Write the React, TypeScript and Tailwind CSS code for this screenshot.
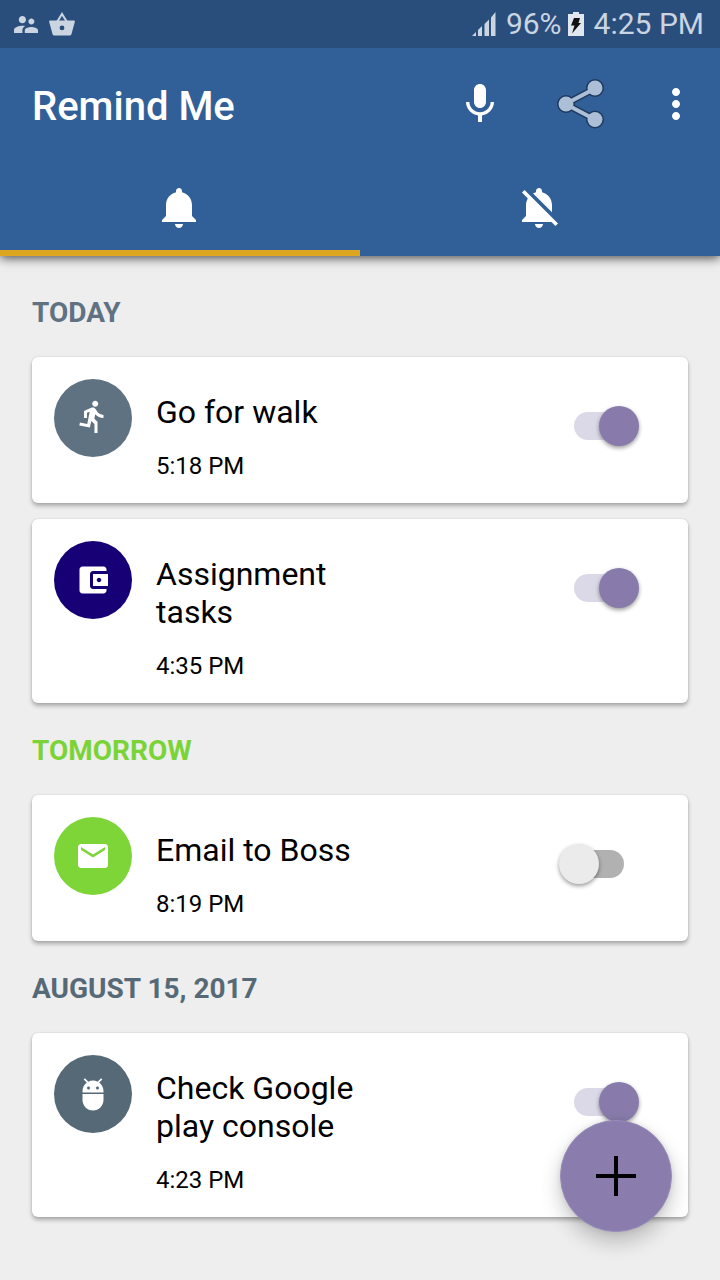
import { useState, type ReactNode } from "react";

const paths = {
  mic: "M12 14c1.66 0 2.99-1.34 2.99-3L15 5c0-1.66-1.34-3-3-3S9 3.34 9 5v6c0 1.66 1.34 3 3 3zm5.3-3c0 3-2.54 5.1-5.3 5.1S6.7 14 6.7 11H5c0 3.41 2.72 6.23 6 6.72V21h2v-3.28c3.28-.48 6-3.3 6-6.72h-1.7z",
  more: "M12 8c1.1 0 2-.9 2-2s-.9-2-2-2-2 .9-2 2 .9 2 2 2zm0 2c-1.1 0-2 .9-2 2s.9 2 2 2 2-.9 2-2-.9-2-2-2zm0 6c-1.1 0-2 .9-2 2s.9 2 2 2 2-.9 2-2-.9-2-2-2z",
  bell: "M11.5 22c1.1 0 2-.9 2-2h-4c0 1.1.9 2 2 2zm6.5-6v-5.5c0-3.07-2.13-5.64-5-6.32V3.5c0-.83-.67-1.5-1.5-1.5S10 2.67 10 3.5v.68c-2.87.68-5 3.25-5 6.32V16l-2 2v1h17v-1l-2-2z",
  bellOff:
    "M11.5 22c1.1 0 2-.9 2-2h-4c0 1.1.9 2 2 2zM18 10.5c0-3.07-2.13-5.64-5-6.32V3.5c0-.83-.67-1.5-1.5-1.5S10 2.67 10 3.5v.68c-.51.12-.99.32-1.45.56L18 14.18V10.5zm-.27 8.5l2 2L21 19.73 4.27 3 3 4.27l2.92 2.92C5.34 8.15 5 9.29 5 10.5V16l-2 2v1h14.73z",
  run: "M13.49 5.48c1.1 0 2-.9 2-2s-.9-2-2-2-2 .9-2 2 .9 2 2 2zm-3.6 13.9l1-4.4 2.1 2v6h2v-7.5l-2.1-2 .6-3c1.3 1.5 3.3 2.5 5.5 2.5v-2c-1.9 0-3.5-1-4.3-2.4l-1-1.6c-.4-.6-1-1-1.7-1-.3 0-.5.1-.8.1l-5.2 2.2v4.7h2v-3.4l1.8-.7-1.6 8.1-4.9-1-.4 2 7 1.4z",
  wallet:
    "M21 18v1c0 1.1-.9 2-2 2H5c-1.11 0-2-.9-2-2V5c0-1.1.89-2 2-2h14c1.1 0 2 .9 2 2v1h-9c-1.11 0-2 .9-2 2v8c0 1.1.89 2 2 2h9zm-9-2h10V8H12v8zm4-2.5c-.83 0-1.5-.67-1.5-1.5s.67-1.5 1.5-1.5 1.5.67 1.5 1.5-.67 1.5-1.5 1.5z",
  mail: "M20 4H4c-1.1 0-1.99.9-1.99 2L2 18c0 1.1.9 2 2 2h16c1.1 0 2-.9 2-2V6c0-1.1-.9-2-2-2zm0 4l-8 5-8-5V6l8 5 8-5v2z",
  android:
    "M5 16c0 3.87 3.13 7 7 7s7-3.13 7-7v-4H5v4zM16.12 4.37l2.1-2.1-.82-.83-2.3 2.31C14.16 3.28 13.12 3 12 3s-2.16.28-3.09.75L6.6 1.44l-.82.83 2.1 2.1C6.14 5.64 5 7.68 5 10v1h14v-1c0-2.32-1.14-4.36-2.88-5.63zM9 9c-.55 0-1-.45-1-1s.45-1 1-1 1 .45 1 1-.45 1-1 1zm6 0c-.55 0-1-.45-1-1s.45-1 1-1 1 .45 1 1-.45 1-1 1z",
  people:
    "M16.5 12c1.38 0 2.49-1.12 2.49-2.5S17.88 7 16.5 7C15.12 7 14 8.12 14 9.5s1.12 2.5 2.5 2.5zM9 11c1.66 0 2.99-1.34 2.99-3S10.66 5 9 5C7.34 5 6 6.34 6 8s1.34 3 3 3zm7.5 3c-1.83 0-5.5.92-5.5 2.75V19h11v-2.25c0-1.83-3.67-2.75-5.5-2.75zM9 13c-2.33 0-7 1.17-7 3.5V19h7v-2.25c0-.85.33-2.34 2.37-3.47C10.5 13.1 9.66 13 9 13z",
};

type IconProps = { d: string; className: string; viewBox?: string };

function Icon({ d, className, viewBox = "0 0 24 24" }: IconProps) {
  return (
    <svg viewBox={viewBox} className={className} fill="currentColor" aria-hidden="true">
      <path d={d} />
    </svg>
  );
}

function ShareIcon() {
  return (
    <svg viewBox="0 0 48 52" className="h-[52px] w-12" aria-hidden="true">
      <g fill="none" stroke="#1e3a5f" strokeWidth="7">
        <path d="M39 10.500 9.500 26 39 41.500" />
      </g>
      <g fill="#1e3a5f">
        <circle cx="39" cy="10" r="9" />
        <circle cx="10" cy="26" r="9" />
        <circle cx="39" cy="41.500" r="9" />
      </g>
      <path d="M39 10.500 9.500 26 39 41.500" fill="none" stroke="#adbfd7" strokeWidth="4" />
      <g fill="#adbfd7">
        <circle cx="39" cy="10" r="7.500" />
        <circle cx="10" cy="26" r="7.500" />
        <circle cx="39" cy="41.500" r="7.500" />
      </g>
    </svg>
  );
}

function StatusBar() {
  return (
    <div className="flex h-12 items-center justify-between bg-[#294e7c] pr-4 pl-3.5 text-[#cbd4e1]">
      <div className="flex items-center gap-[11px]">
        <Icon d={paths.people} viewBox="2 5 20 14" className="h-[17px] w-6" />
        <svg viewBox="0 0 26 24" className="h-6 w-[26px]" aria-hidden="true">
          <path d="M8 10 13 2l5 8" fill="none" stroke="currentColor" strokeWidth="2" />
          <path
            fill="currentColor"
            fillRule="evenodd"
            d="M1 8.500h24q1.200 0 .8 1.500l-3.300 12q-.4 1.500-2 1.500h-15q-1.600 0-2-1.500L.2 10Q-.2 8.500 1 8.500ZM13 13.500a2.400 2.400 0 1 0 0 4.800 2.400 2.400 0 0 0 0-4.800Z"
          />
        </svg>
      </div>
      <div className="flex items-center gap-2.5 text-[30px] leading-9">
        <svg viewBox="0 0 25 24" className="h-6 w-[25px]" fill="currentColor" aria-hidden="true">
          <path d="M1 24 5 20v4ZM7 18l4-4v10H7ZM13.500 12 18 7.500V24h-4.500ZM20 5.500 24.500 0v24H20Z" />
        </svg>
        <div className="flex items-center gap-1.5">
          <span>96%</span>
          <svg viewBox="0 0 16 24" className="h-6 w-4" aria-hidden="true">
            <path d="M0 2h5V0h6v2h5v22H0Z" fill="#e1e7ef" />
            <path d="M6 6h6l-1.500 5H13L4 21.500l2.500-8H3Z" fill="#111111" />
          </svg>
        </div>
        <span>4:25 PM</span>
      </div>
    </div>
  );
}

type TabProps = { label: string; selected: boolean; onClick: () => void; children: ReactNode };

function Tab({ label, selected, onClick, children }: TabProps) {
  return (
    <button
      type="button"
      role="tab"
      aria-label={label}
      aria-selected={selected}
      onClick={onClick}
      className={`flex flex-1 items-center justify-center border-y-[6px] border-t-transparent ${
        selected ? "border-b-[#dca621]" : "border-b-transparent"
      }`}
    >
      {children}
    </button>
  );
}

type Reminder = {
  id: string;
  title: string;
  time: string;
  icon: string;
  viewBox?: string;
  color: string;
  on: boolean;
};

const groups: { label: string; color: string; items: Reminder[] }[] = [
  {
    label: "TODAY",
    color: "text-[#5f7282]",
    items: [
      { id: "walk", title: "Go for walk", time: "5:18 PM", icon: paths.run, viewBox: "0 1 24 24", color: "bg-[#5f7282]", on: true },
      { id: "assignment", title: "Assignment tasks", time: "4:35 PM", icon: paths.wallet, color: "bg-[#170075]", on: true },
    ],
  },
  {
    label: "TOMORROW",
    color: "text-[#7bd437]",
    items: [{ id: "email", title: "Email to Boss", time: "8:19 PM", icon: paths.mail, color: "bg-[#7dd538]", on: false }],
  },
  {
    label: "AUGUST 15, 2017",
    color: "text-[#566977]",
    items: [{ id: "console", title: "Check Google play console", time: "4:23 PM", icon: paths.android, color: "bg-[#566977]", on: true }],
  },
];

function ReminderCard({ item }: { item: Reminder }) {
  return (
    <li className="flex items-start rounded-md bg-white pr-16 pl-[22px] shadow-[0_3px_4px_rgba(0,0,0,0.28),0_0_2px_rgba(0,0,0,0.14)]">
      <div className={`mt-[22px] mr-6 flex size-[78px] shrink-0 items-center justify-center rounded-full text-white ${item.color}`}>
        <Icon d={item.icon} viewBox={item.viewBox} className="size-9" />
      </div>
      <div className="flex-1 pt-9 pb-[23px] text-black">
        <label htmlFor={item.id} className="block max-w-[220px] text-[32px] leading-[38px]">
          {item.title}
        </label>
        <p className="mt-[21px] text-2xl leading-7">{item.time}</p>
      </div>
      <input
        id={item.id}
        type="checkbox"
        role="switch"
        defaultChecked={item.on}
        className="relative mt-[55px] h-7 w-[50px] shrink-0 cursor-pointer appearance-none rounded-full bg-[#b1b1b1] before:absolute before:-top-1.5 before:-left-[15px] before:size-10 before:rounded-full before:bg-[#ebebeb] before:shadow-[0_2px_4px_rgba(0,0,0,0.4)] checked:bg-[#dbd9e7] checked:before:left-[25px] checked:before:bg-[#887bab]"
      />
    </li>
  );
}

export default function App() {
  const [tab, setTab] = useState(0);
  return (
    <div className="min-h-screen bg-[#eeeeee] font-[Roboto,sans-serif]">
      <header className="relative bg-[#315f97] text-white shadow-[0_2px_10px_rgba(0,0,0,0.7)]">
        <StatusBar />
        <div className="flex h-28 items-center pr-5 pl-8">
          <h1 className="flex-1 pt-1.5 text-[40px] leading-[48px] font-medium">Remind Me</h1>
          <div className="flex items-center gap-[52px]">
            <button type="button" aria-label="Voice input">
              <Icon d={paths.mic} className="size-12" />
            </button>
            <button type="button" aria-label="Share">
              <ShareIcon />
            </button>
            <button type="button" aria-label="More options" className="-ml-1">
              <Icon d={paths.more} className="size-12" />
            </button>
          </div>
        </div>
        <div role="tablist" className="flex h-24">
          <Tab label="Active reminders" selected={tab === 0} onClick={() => setTab(0)}>
            <Icon d={paths.bell} className="size-12" />
          </Tab>
          <Tab label="Muted reminders" selected={tab === 1} onClick={() => setTab(1)}>
            <Icon d={paths.bellOff} className="size-12" />
          </Tab>
        </div>
      </header>

      <main className="px-8 pt-[9px] pb-12">
        {groups.map((group) => (
          <section key={group.label}>
            <h2 className={`pt-8 pb-7 text-[28px] leading-8 font-bold ${group.color}`}>{group.label}</h2>
            <ul className="flex flex-col gap-4">
              {group.items.map((item) => (
                <ReminderCard key={item.id} item={item} />
              ))}
            </ul>
          </section>
        ))}
      </main>

      <button
        type="button"
        aria-label="Add reminder"
        className="fixed right-12 bottom-12 flex size-28 items-center justify-center rounded-full border border-[#988dba] bg-[#8a7dae] text-black shadow-[0_10px_20px_rgba(0,0,0,0.22),0_0_6px_rgba(0,0,0,0.1)]"
      >
        <svg viewBox="0 0 40 40" className="size-10" stroke="currentColor" strokeWidth="4" aria-hidden="true">
          <path d="M20 0v40M0 20h40" />
        </svg>
      </button>
    </div>
  );
}
